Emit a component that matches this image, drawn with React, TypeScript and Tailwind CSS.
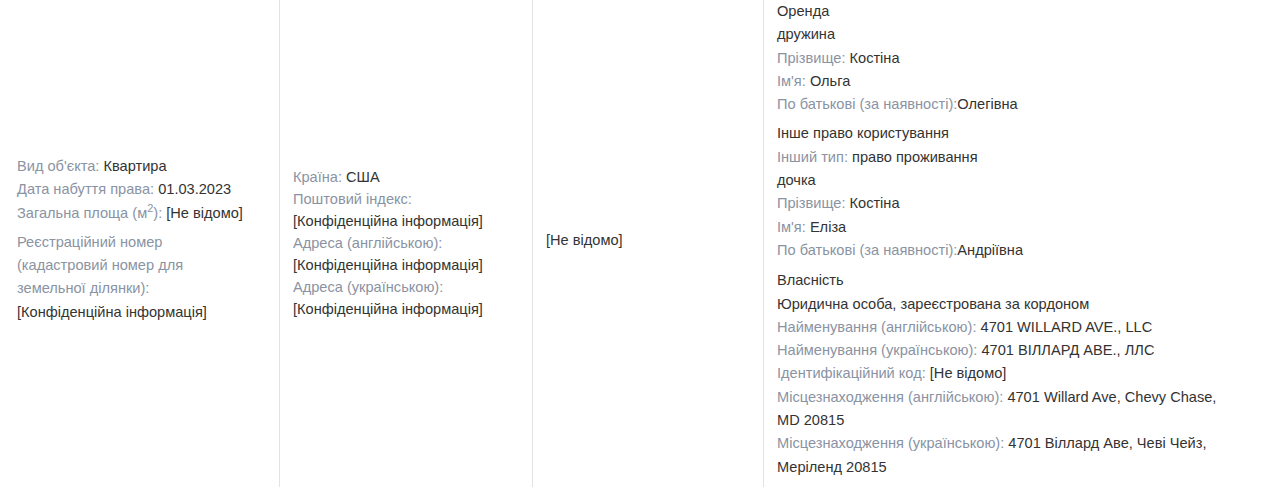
import React from "react";

const L = ({ children }: { children: React.ReactNode }) => (
  <span className="text-[#8a93a3]">{children}</span>
);

export default function App() {
  return (
    <div
      className="flex h-[487px] w-[1266px] bg-white text-[14.6px] text-[#333]"
      style={{ fontFamily: '"Liberation Sans", Arial, sans-serif' }}
    >
      <div className="flex w-[280px] shrink-0 items-center border-r border-[#e3e3e3] pl-[17px] pb-[8px]">
        <div className="w-[232px] leading-[23.3px]">
          <div className="mb-[6px]">
            <div>
              <L>Вид об'єкта: </L>Квартира
            </div>
            <div>
              <L>Дата набуття права: </L>01.03.2023
            </div>
            <div>
              <L>
                Загальна площа (м<sup>2</sup>):
              </L>{" "}
              [Не відомо]
            </div>
          </div>
          <div>
            <L>Реєстраційний номер (кадастровий номер для земельної ділянки): </L>
            [Конфіденційна інформація]
          </div>
        </div>
      </div>

      <div className="flex w-[253px] shrink-0 items-center border-r border-[#e3e3e3] pl-[13px] pr-[14px] pb-[2px]">
        <div className="leading-[22px]">
          <div>
            <L>Країна: </L>США
          </div>
          <div>
            <L>Поштовий індекс: </L>[Конфіденційна інформація]
          </div>
          <div>
            <L>Адреса (англійською): </L>[Конфіденційна інформація]
          </div>
          <div>
            <L>Адреса (українською): </L>[Конфіденційна інформація]
          </div>
        </div>
      </div>

      <div className="flex w-[231px] shrink-0 items-center border-r border-[#e3e3e3] pl-[13px] pb-[6px]">
        <div className="leading-[23px]">[Не відомо]</div>
      </div>

      <div className="flex-1 pl-[13px] pr-[31px] leading-[23.3px]">
        <div className="mb-[6px]">
          <div>Оренда</div>
          <div>дружина</div>
          <div>
            <L>Прізвище: </L>Костіна
          </div>
          <div>
            <L>Ім'я: </L>Ольга
          </div>
          <div>
            <L>По батькові (за наявності):</L>Олегівна
          </div>
        </div>
        <div className="mb-[7px]">
          <div>Інше право користування</div>
          <div>
            <L>Інший тип: </L>право проживання
          </div>
          <div>дочка</div>
          <div>
            <L>Прізвище: </L>Костіна
          </div>
          <div>
            <L>Ім'я: </L>Еліза
          </div>
          <div>
            <L>По батькові (за наявності):</L>Андріївна
          </div>
        </div>
        <div>
          <div>Власність</div>
          <div>Юридична особа, зареєстрована за кордоном</div>
          <div>
            <L>Найменування (англійською): </L>4701 WILLARD AVE., LLC
          </div>
          <div>
            <L>Найменування (українською): </L>4701 ВІЛЛАРД АВЕ., ЛЛС
          </div>
          <div>
            <L>Ідентифікаційний код: </L>[Не відомо]
          </div>
          <div>
            <L>Місцезнаходження (англійською): </L>4701 Willard Ave, Chevy Chase, MD 20815
          </div>
          <div>
            <L>Місцезнаходження (українською): </L>4701 Віллард Аве, Чеві Чейз, Меріленд 20815
          </div>
        </div>
      </div>
    </div>
  );
}
